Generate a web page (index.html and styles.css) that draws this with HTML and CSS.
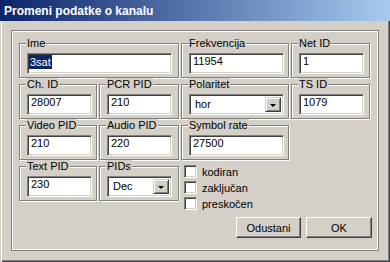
FILE: index.html
```html
<!DOCTYPE html>
<html lang="sr">
<head>
    <meta charset="UTF-8">
    <title>Promeni podatke o kanalu</title>
    <link rel="stylesheet" href="styles.css">
</head>
<body>
    <div class="window">
        <div class="titlebar">Promeni podatke o kanalu</div>
        <div class="panel">
            <div class="grid">
                <div class="group span2">
                    <span class="legend">Ime</span>
                    <div class="field name"><span class="sel">3sat</span></div>
                </div>
                <div class="group">
                    <span class="legend">Frekvencija</span>
                    <div class="field wide">11954</div>
                </div>
                <div class="group">
                    <span class="legend">Net ID</span>
                    <div class="field">1</div>
                </div>

                <div class="group">
                    <span class="legend">Ch. ID</span>
                    <div class="field">28007</div>
                </div>
                <div class="group">
                    <span class="legend">PCR PID</span>
                    <div class="field">210</div>
                </div>
                <div class="group">
                    <span class="legend">Polaritet</span>
                    <div class="combo wide"><span class="combo-text">hor</span><span class="combo-btn"></span></div>
                </div>
                <div class="group">
                    <span class="legend">TS ID</span>
                    <div class="field">1079</div>
                </div>

                <div class="group">
                    <span class="legend">Video PID</span>
                    <div class="field">210</div>
                </div>
                <div class="group">
                    <span class="legend">Audio PID</span>
                    <div class="field">220</div>
                </div>
                <div class="group">
                    <span class="legend">Symbol rate</span>
                    <div class="field wide">27500</div>
                </div>

                <div class="group first">
                    <span class="legend">Text PID</span>
                    <div class="field">230</div>
                </div>
                <div class="group">
                    <span class="legend">PIDs</span>
                    <div class="combo"><span class="combo-text">Dec</span><span class="combo-btn"></span></div>
                </div>
                <div class="checks">
                    <label class="check"><span class="box"></span>kodiran</label>
                    <label class="check"><span class="box"></span>zaključan</label>
                    <label class="check"><span class="box"></span>preskočen</label>
                </div>
            </div>

            <div class="buttons">
                <button class="btn cancel">Odustani</button>
                <button class="btn ok">OK</button>
            </div>
        </div>
    </div>
</body>
</html>
```

FILE: styles.css
```css
body {
    margin: 0;
    font-family: "Liberation Sans", Arial, sans-serif;
    font-size: 11px;
    color: #000;
    background-color: #d4d0c8;
}
.window {
    width: 390px;
    height: 262px;
    box-sizing: border-box;
    background-color: #d4d0c8;
    box-shadow: inset 1px 0 #d4d0c8, inset 2px 0 #fff, inset -1px -1px #404040, inset -2px -2px #808080;
    overflow: hidden;
}
.titlebar {
    height: 21px;
    box-sizing: border-box;
    padding: 2px 0 0 4px;
    line-height: 19px;
    font-size: 12px;
    font-weight: bold;
    color: #fff;
    background: linear-gradient(to right, #0a246a, #a6caf0);
    white-space: nowrap;
}
.panel {
    width: 368px;
    height: 221px;
    box-sizing: border-box;
    margin: 9px 0 0 11px;
    border: 1px solid #808080;
    box-shadow: inset 1px 1px #fff, inset -1px -1px #fff;
}
.grid {
    display: grid;
    grid-template-columns: 78px 80px 108px 79px;
    grid-auto-rows: 35px;
    column-gap: 2px;
    row-gap: 6px;
    margin: 12px 0 0 7px;
}
.group {
    position: relative;
    height: 35px;
    box-sizing: border-box;
    padding: 9px 0 0 7px;
    border: 1px solid #808080;
    box-shadow: inset 1px 1px #fff, 1px 1px #fff;
}
.span2 {
    grid-column: span 2;
}
.first {
    grid-column: 1;
}
.legend {
    position: absolute;
    top: -7px;
    left: 6px;
    padding: 0 1px;
    line-height: 13px;
    background-color: #d4d0c8;
}
.field, .combo {
    width: 65px;
    height: 21px;
    box-sizing: border-box;
    padding: 0 1px 2px;
    line-height: 15px;
    background-color: #fff;
    border: 1px solid;
    border-color: #808080 #fff #fff #808080;
    box-shadow: inset 1px 1px #404040, inset -1px -1px #d4d0c8;
    padding-left: 3px;
    white-space: nowrap;
}
.field.name {
    width: 145px;
}
.wide {
    width: 95px;
}
.sel {
    display: inline-block;
    margin-left: -2px;
    padding: 0 1px;
    line-height: 14px;
    margin-top: 1px;
    color: #fff;
    background-color: #0a246a;
}
.combo {
    display: flex;
    justify-content: space-between;
    padding: 2px 2px 2px 5px;
}
.combo-text {
    line-height: 15px;
}
.combo-btn {
    width: 16px;
    height: 15px;
    box-sizing: border-box;
    border: 1px solid;
    border-color: #d4d0c8 #404040 #404040 #d4d0c8;
    box-shadow: inset 1px 1px #fff, inset -1px -1px #808080;
    background-color: #d4d0c8;
    display: flex;
    align-items: center;
    justify-content: center;
}
.combo-btn::after {
    content: "";
    border-left: 3px solid transparent;
    border-right: 3px solid transparent;
    border-top: 3px solid #000;
    margin-top: 1px;
}
.checks {
    grid-column: 3 / span 2;
    margin: -2px 0 0 3px;
}
.check {
    display: flex;
    height: 16px;
    line-height: 16px;
    gap: 5px;
}
.box {
    width: 13px;
    height: 13px;
    box-sizing: border-box;
    margin-top: 1px;
    background-color: #fff;
    border: 1px solid;
    border-color: #808080 #fff #fff #808080;
    box-shadow: inset 1px 1px #404040, inset -1px -1px #d4d0c8;
}
.buttons {
    display: flex;
    justify-content: flex-end;
    gap: 5px;
    margin: 16px 6px 0 0;
}
.btn {
    width: 65px;
    height: 21px;
    padding: 0;
    font-family: inherit;
    font-size: 11px;
    color: #000;
    background-color: #d4d0c8;
    border: 1px solid;
    border-color: #fff #404040 #404040 #fff;
    box-shadow: inset -1px -1px #808080;
}
.btn.ok {
    width: 66px;
}
```
